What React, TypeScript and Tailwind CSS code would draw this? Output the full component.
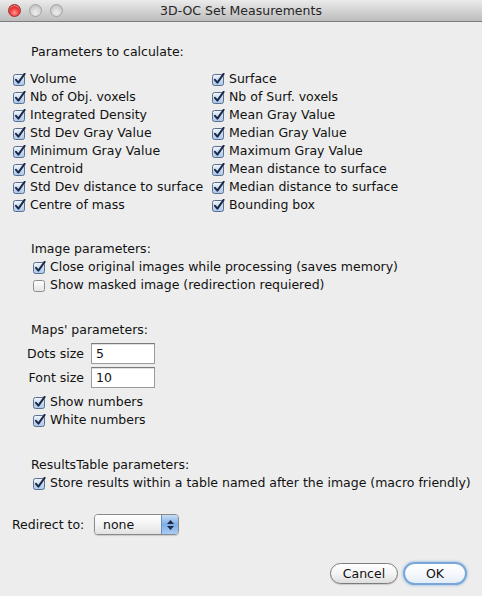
import React from "react";

function CheckBox({ checked }: { checked: boolean }) {
  return (
    <svg width="13" height="13" viewBox="0 0 13 13" className="shrink-0">
      <defs>
        <linearGradient id="cbOn" x1="0" y1="0" x2="0" y2="1">
          <stop offset="0" stopColor="#f4f8fd" />
          <stop offset="0.5" stopColor="#c9dcf2" />
          <stop offset="1" stopColor="#a8c6ea" />
        </linearGradient>
        <linearGradient id="cbOff" x1="0" y1="0" x2="0" y2="1">
          <stop offset="0" stopColor="#ffffff" />
          <stop offset="1" stopColor="#e4e4e4" />
        </linearGradient>
      </defs>
      <rect
        x="0.5"
        y="1.5"
        width="11"
        height="11"
        rx="2"
        fill={checked ? "url(#cbOn)" : "url(#cbOff)"}
        stroke={checked ? "#5d6f8c" : "#8d8d8d"}
      />
      {checked && (
        <path
          d="M3 6.8 L5.4 9.6 L11.6 0.9"
          fill="none"
          stroke="#1b2848"
          strokeWidth="2"
          strokeLinecap="round"
          strokeLinejoin="round"
        />
      )}
    </svg>
  );
}

function CheckItem({ label, checked = true }: { label: string; checked?: boolean }) {
  return (
    <div className="flex h-[18px] items-center">
      <CheckBox checked={checked} />
      <span className="ml-[4px] whitespace-nowrap">{label}</span>
    </div>
  );
}

function Light({ red }: { red?: boolean }) {
  return (
    <div
      className={
        red
          ? "h-[13px] w-[13px] rounded-full border border-[#a52a2a] bg-[radial-gradient(circle_at_50%_70%,#ff9a9a_0%,#f03c3c_45%,#b81414_100%)] shadow-[inset_0_1px_1px_rgba(255,255,255,0.5)]"
          : "h-[13px] w-[13px] rounded-full border border-[#a3a3a3] bg-[radial-gradient(circle_at_50%_70%,#eeeeee_0%,#d2d2d2_55%,#b4b4b4_100%)]"
      }
    />
  );
}

export default function App() {
  const left = [
    "Volume",
    "Nb of Obj. voxels",
    "Integrated Density",
    "Std Dev Gray Value",
    "Minimum Gray Value",
    "Centroid",
    "Std Dev distance to surface",
    "Centre of mass",
  ];
  const right = [
    "Surface",
    "Nb of Surf. voxels",
    "Mean Gray Value",
    "Median Gray Value",
    "Maximum Gray Value",
    "Mean distance to surface",
    "Median distance to surface",
    "Bounding box",
  ];
  const grid: string[] = [];
  left.forEach((l, i) => {
    grid.push(l);
    grid.push(right[i]);
  });

  return (
    <div className="flex h-[596px] w-[482px] flex-col overflow-hidden bg-[#ededed] font-['DejaVu_Sans',sans-serif] text-[12.5px] leading-[18px] text-[#111]">
      {/* Title bar */}
      <div className="relative flex h-[22px] shrink-0 items-center border-b border-[#7d7d7d] bg-gradient-to-b from-[#ebebeb] to-[#bdbdbd]">
        <div className="flex items-center gap-[8px] pl-[8px]">
          <Light red />
          <Light />
          <Light />
        </div>
        <div className="absolute inset-0 flex items-center justify-center text-[12.5px] text-[#262626]">
          3D-OC Set Measurements
        </div>
      </div>

      {/* Body */}
      <div className="flex flex-col">
        <div className="mt-[21px] pl-[31px]">Parameters to calculate:</div>

        <div className="mt-[9px] grid grid-cols-[199px_1fr] pl-[13px]">
          {grid.map((g) => (
            <CheckItem key={g} label={g} />
          ))}
        </div>

        <div className="mt-[26px] pl-[31px]">Image parameters:</div>
        <div className="flex flex-col pl-[33px]">
          <CheckItem label="Close original images while processing (saves memory)" />
          <CheckItem label="Show masked image (redirection requiered)" checked={false} />
        </div>

        <div className="mt-[27px] pl-[31px]">Maps' parameters:</div>
        <div className="mt-[4px] flex flex-col gap-[3px]">
          {[
            ["Dots size", "5"],
            ["Font size", "10"],
          ].map(([l, v]) => (
            <div key={l} className="flex items-center">
              <div className="w-[84px] text-right">{l}</div>
              <div className="ml-[7px] flex h-[21px] w-[64px] items-center border border-[#9b9b9b] border-t-[#7a7a7a] bg-white pl-[4px] shadow-[inset_0_1px_0_#e0e0e0]">
                {v}
              </div>
            </div>
          ))}
        </div>
        <div className="mt-[5px] flex flex-col pl-[33px]">
          <CheckItem label="Show numbers" />
          <CheckItem label="White numbers" />
        </div>

        <div className="mt-[27px] pl-[31px]">ResultsTable parameters:</div>
        <div className="flex flex-col pl-[33px]">
          <CheckItem label="Store results within a table named after the image (macro friendly)" />
        </div>

        <div className="mt-[22px] flex items-center pl-[12px]">
          <span className="w-[82px]">Redirect to:</span>
          <div className="flex h-[21px] w-[85px] overflow-hidden rounded-[4px] border border-[#8a8a8a] shadow-[0_1px_1px_rgba(0,0,0,0.15)]">
            <div className="flex flex-1 items-center bg-gradient-to-b from-[#ffffff] via-[#f3f3f3] to-[#e2e2e2] pl-[8px]">
              none
            </div>
            <div className="flex w-[17px] flex-col items-center justify-center gap-[2px] border-l border-[#6d8fbf] bg-gradient-to-b from-[#c9ddf6] via-[#7eaee6] to-[#a9cdf3]">
              <svg width="7" height="4" viewBox="0 0 7 4">
                <path d="M3.5 0 L7 4 L0 4 Z" fill="#1d2b45" />
              </svg>
              <svg width="7" height="4" viewBox="0 0 7 4">
                <path d="M0 0 L7 0 L3.5 4 Z" fill="#1d2b45" />
              </svg>
            </div>
          </div>
        </div>

        <div className="mt-[27px] flex items-center justify-end gap-[5px] pr-[15px]">
          <div className="flex h-[21px] w-[68px] items-center justify-center rounded-full border border-[#7c7c7c] bg-gradient-to-b from-[#ffffff] via-[#f4f4f4] to-[#dedede] shadow-[0_1px_1px_rgba(0,0,0,0.15)]">
            Cancel
          </div>
          <div className="flex h-[23px] w-[64px] items-center justify-center rounded-full border-2 border-[#79a6d9] bg-gradient-to-b from-[#ffffff] via-[#f6f9fd] to-[#e3ecf7] shadow-[0_0_3px_rgba(80,140,210,0.7)]">
            OK
          </div>
        </div>
      </div>
    </div>
  );
}
